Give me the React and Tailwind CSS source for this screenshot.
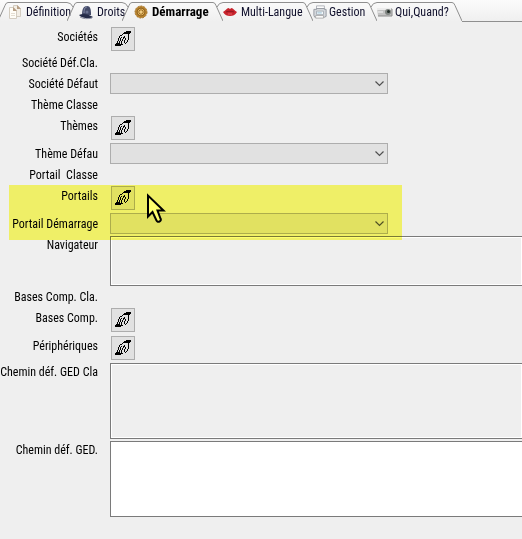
import { useState } from "react";
import clsx from "clsx";

const STROKE = "#8f8f8f";

function DocIcon() {
  return (
    <svg width="14" height="16" viewBox="0 0 14 16" className="shrink-0">
      <path d="M5.500 1.500h4l3 3v8h-7z" fill="#f3eee5" stroke="#d3ccc0" />
      <path d="M1.500 3.500h4l3 3v8h-7z" fill="#fffdf7" stroke="#d3ccc0" />
      <path d="M5 3v4h4zM9 1v4h4z" fill="#b79f85" />
      <path d="M3 9.500h4M3 11.500h4" stroke="#e4ded2" />
    </svg>
  );
}

function HelmetIcon() {
  return (
    <svg width="14" height="16" viewBox="0 0 14 16" className="shrink-0">
      <path d="M3 11C3 6 4 2 8 2s4 5 4 9z" fill="#434a68" />
      <path d="M5 9C5 5 6 3 8 3" stroke="#8c93b0" fill="none" />
      <path d="M0 11c4-2 9-1 14 2-2 2-11 2-14-2z" fill="#252c49" />
      <circle cx="8" cy="8" r="1.5" fill="#68708f" />
      <path d="M1 13c3 2 8 2 12 1" stroke="#8c90a2" fill="none" />
    </svg>
  );
}

function WheelIcon() {
  return (
    <svg width="14" height="16" viewBox="0 0 14 16" className="shrink-0">
      <circle cx="7" cy="8" r="6" fill="#b98430" stroke="#a8772c" strokeDasharray="2 1" />
      <circle cx="7" cy="8" r="4" fill="#e0b25d" stroke="#94661f" />
      <path d="M7 4v8M3 8h8M4 5l6 6M10 5l-6 6" stroke="#9a6c26" />
      <circle cx="7" cy="8" r="1.5" fill="#f0cc82" />
    </svg>
  );
}

function LipsIcon() {
  return (
    <svg width="14" height="16" viewBox="0 0 14 16" className="shrink-0">
      <path d="M0 8c2-1 4-4 5.500-4L7 5l1.500-1C10 4 12 7 14 8c-2 3-4 4-7 4S2 11 0 8z" fill="#c8232c" />
      <path d="M3 8c3-1 5-1 8 0" stroke="#8f1520" fill="none" />
      <path d="M5 10h4" stroke="#e05c60" />
    </svg>
  );
}

function PrinterIcon() {
  return (
    <svg width="14" height="16" viewBox="0 0 16 16" className="shrink-0">
      <path d="M4 5V1h9v4" fill="#fdfdfd" stroke="#a9adb3" />
      <path d="M1 5h3v-1h9v1h2v8l-2 1H2l-1-2z" fill="#d5d8dc" stroke="#8f949b" />
      <path d="M4 7h8v4H4z" fill="#f4f8fb" stroke="#a4abb3" />
      <path d="M3 12h9v3H3z" fill="#fafafa" stroke="#aaa" />
      <path d="M5 9h5" stroke="#8dbad0" />
    </svg>
  );
}

function CameraIcon() {
  return (
    <svg width="16" height="16" viewBox="0 0 16 16" className="shrink-0">
      <path d="M0 4h15v8H1z" fill="#c3c3c3" />
      <path d="M0 4h14v2H0z" fill="#ececec" />
      <path d="M1 12h14V5" stroke="#8a8a8a" fill="none" />
      <circle cx="11" cy="8" r="3" fill="#808582" />
      <circle cx="11.500" cy="7.500" r="1.500" fill="#202a25" />
      <path d="M1 8h5" stroke="#f8f8f8" />
    </svg>
  );
}

// One character per pixel
const HANDS = [
  "...........#####",
  ".........#######",
  "........#######.",
  ".......#.....#..",
  ".....##......#..",
  "....#....#...#..",
  "....#.#.##...#..",
  "...#.#..#.#..#..",
  "...#.#.#..#..#..",
  "...#.#.#.#..#...",
  "..#.#.#..#..#...",
  "..#.#.#..#.#....",
  ".####.#...#.....",
  "########........",
  "######..........",
];

function HandsIcon() {
  return (
    <svg width="16" height="16" viewBox="0 0 16 16" shapeRendering="crispEdges" className="shrink-0">
      {HANDS.map((line, y) =>
        [...line].map((c, x) => c === "#" && <rect key={`${x}-${y}`} x={x} y={y} width="1" height="1" />)
      )}
    </svg>
  );
}

// Slanted edge between two tabs; flipped for the tabs after the active one
function TabEdge({ flip, single }) {
  return (
    <svg
      width="10"
      height="20"
      viewBox="0 0 10 20"
      fill="none"
      stroke={STROKE}
      className={clsx("shrink-0", flip && "-scale-x-100")}
    >
      <path d="M0 19 7 3.500Q8 .500 10 .500" />
      {!single && <path d="M0 .500Q4 .500 6 5" />}
    </svg>
  );
}

function Tab({ tab, active, onSelect }) {
  return (
    <button
      role="tab"
      aria-selected={active}
      onClick={onSelect}
      className={clsx(
        "flex h-5 shrink-0 items-center whitespace-nowrap border-t border-[#8f8f8f] pb-0.5",
        tab.className,
        active ? "text-[13px] font-bold text-black" : "text-[12px] text-[#10102c]"
      )}
    >
      <tab.icon />
      <span>{tab.label}</span>
    </button>
  );
}

const TABS = [
  { label: "Définition", icon: DocIcon, className: "w-[59px] gap-1" },
  { label: "Droits", icon: HelmetIcon, className: "w-[45px] gap-1 pl-0.5" },
  { label: "Démarrage", icon: WheelIcon, className: "w-[81px] gap-1 pl-0.5" },
  { label: "Multi-Langue", icon: LipsIcon, className: "w-[80px] gap-1" },
  { label: "Gestion", icon: PrinterIcon, className: "w-[54px] gap-0.5" },
  { label: "Qui,Quand?", icon: CameraIcon, className: "w-[75px] gap-0.5" },
];

function TabBar() {
  const [active, setActive] = useState(2);

  return (
    <div role="tablist" className="flex h-[22px] items-end bg-linear-to-b from-[#fbfbfb] to-[#efefef]">
      <div className="-ml-0.5 shrink-0">
        <TabEdge single />
      </div>
      {TABS.map((tab, i) => (
        <div key={tab.label} className="flex shrink-0">
          <Tab tab={tab} active={i === active} onSelect={() => setActive(i)} />
          <TabEdge flip={i >= active} single={i === TABS.length - 1} />
        </div>
      ))}
      <div className="flex-1 border-b border-[#8f8f8f]" />
    </div>
  );
}

function Row({ id, label, height, children }) {
  return (
    <div className={clsx("flex items-start gap-3", height)}>
      <label htmlFor={id} className="flex w-[98px] shrink-0 justify-end whitespace-pre leading-[23px]">
        {label}
      </label>
      {children}
    </div>
  );
}

function PickRow({ id, label, height = "h-7" }) {
  return (
    <Row id={id} label={label} height={height}>
      <button
        id={id}
        className="mt-px ml-px flex size-6 items-center justify-center border border-[#adadad] bg-[#e1e1e1]"
      >
        <HandsIcon />
      </button>
    </Row>
  );
}

function SelectRow({ id, label }) {
  return (
    <Row id={id} label={label} height="h-[21px]">
      <div className="relative w-[278px]">
        <select id={id} className="block h-[21px] w-full appearance-none border border-[#adadad] bg-[#e1e1e1]" />
        <svg
          width="9"
          height="6"
          viewBox="0 0 9 6"
          className="pointer-events-none absolute top-2 right-1"
          fill="none"
          stroke="#505050"
        >
          <path d="M.5 .5l4 4 4-4" strokeWidth="1.2" />
        </svg>
      </div>
    </Row>
  );
}

function AreaRow({ id, label, height, areaHeight, readOnly }) {
  return (
    <Row id={id} label={label} height={height}>
      <textarea
        id={id}
        readOnly={readOnly}
        className={clsx(
          "mt-[2px] block min-w-0 flex-1 resize-none border border-r-0 border-[#7a7a7a]",
          areaHeight,
          readOnly ? "bg-[#efefef] inset-ring inset-ring-white" : "bg-white"
        )}
      />
    </Row>
  );
}

function Cursor() {
  return (
    <svg width="20" height="32" viewBox="0 0 20 32" className="absolute top-2 left-[146px]">
      <path
        d="M2 2.500v21l4.500-4.500 4 8.500q1 2 3 1t1-3L11.500 17.500h6z"
        fill="#fff"
        stroke="#000"
        strokeWidth="2"
      />
    </svg>
  );
}

export default function App() {
  return (
    <div className="min-h-screen overflow-hidden bg-[#efefef] font-['Roboto_Condensed',Roboto,sans-serif] text-[12px] text-black">
      <TabBar />
      <form className="pt-1" onSubmit={(e) => e.preventDefault()}>
        <PickRow id="societes" label="Sociétés" height="h-[26px]" />
        <Row label="Société Déf.Cla." height="h-[21px]" />
        <SelectRow id="societe-defaut" label="Société Défaut" />
        <Row label="Thème Classe" height="h-[21px]" />
        <PickRow id="themes" label="Thèmes" />
        <SelectRow id="theme-defaut" label="Thème Défau" />
        <Row label="Portail  Classe" height="h-[21px]" />

        {/* Highlighted portal settings */}
        <div className="relative">
          <PickRow id="portails" label="Portails" />
          <SelectRow id="portail-demarrage" label="Portail Démarrage" />
          <Cursor />
          <div className="pointer-events-none absolute top-0 left-[9px] z-10 h-[55px] w-[393px] bg-[#ffff6e] mix-blend-multiply" />
        </div>

        <AreaRow id="navigateur" label="Navigateur" height="h-[52px]" areaHeight="h-[50px]" readOnly />
        <Row label="Bases Comp. Cla." height="h-[21px]" />
        <PickRow id="bases" label="Bases Comp." />
        <PickRow id="peripheriques" label="Périphériques" height="h-[26px]" />
        <AreaRow id="chemin-cla" label="Chemin déf. GED Cla" height="h-[78px]" areaHeight="h-[76px]" readOnly />
        <AreaRow id="chemin" label="Chemin déf. GED." height="h-[78px]" areaHeight="h-[76px]" />
      </form>
    </div>
  );
}
